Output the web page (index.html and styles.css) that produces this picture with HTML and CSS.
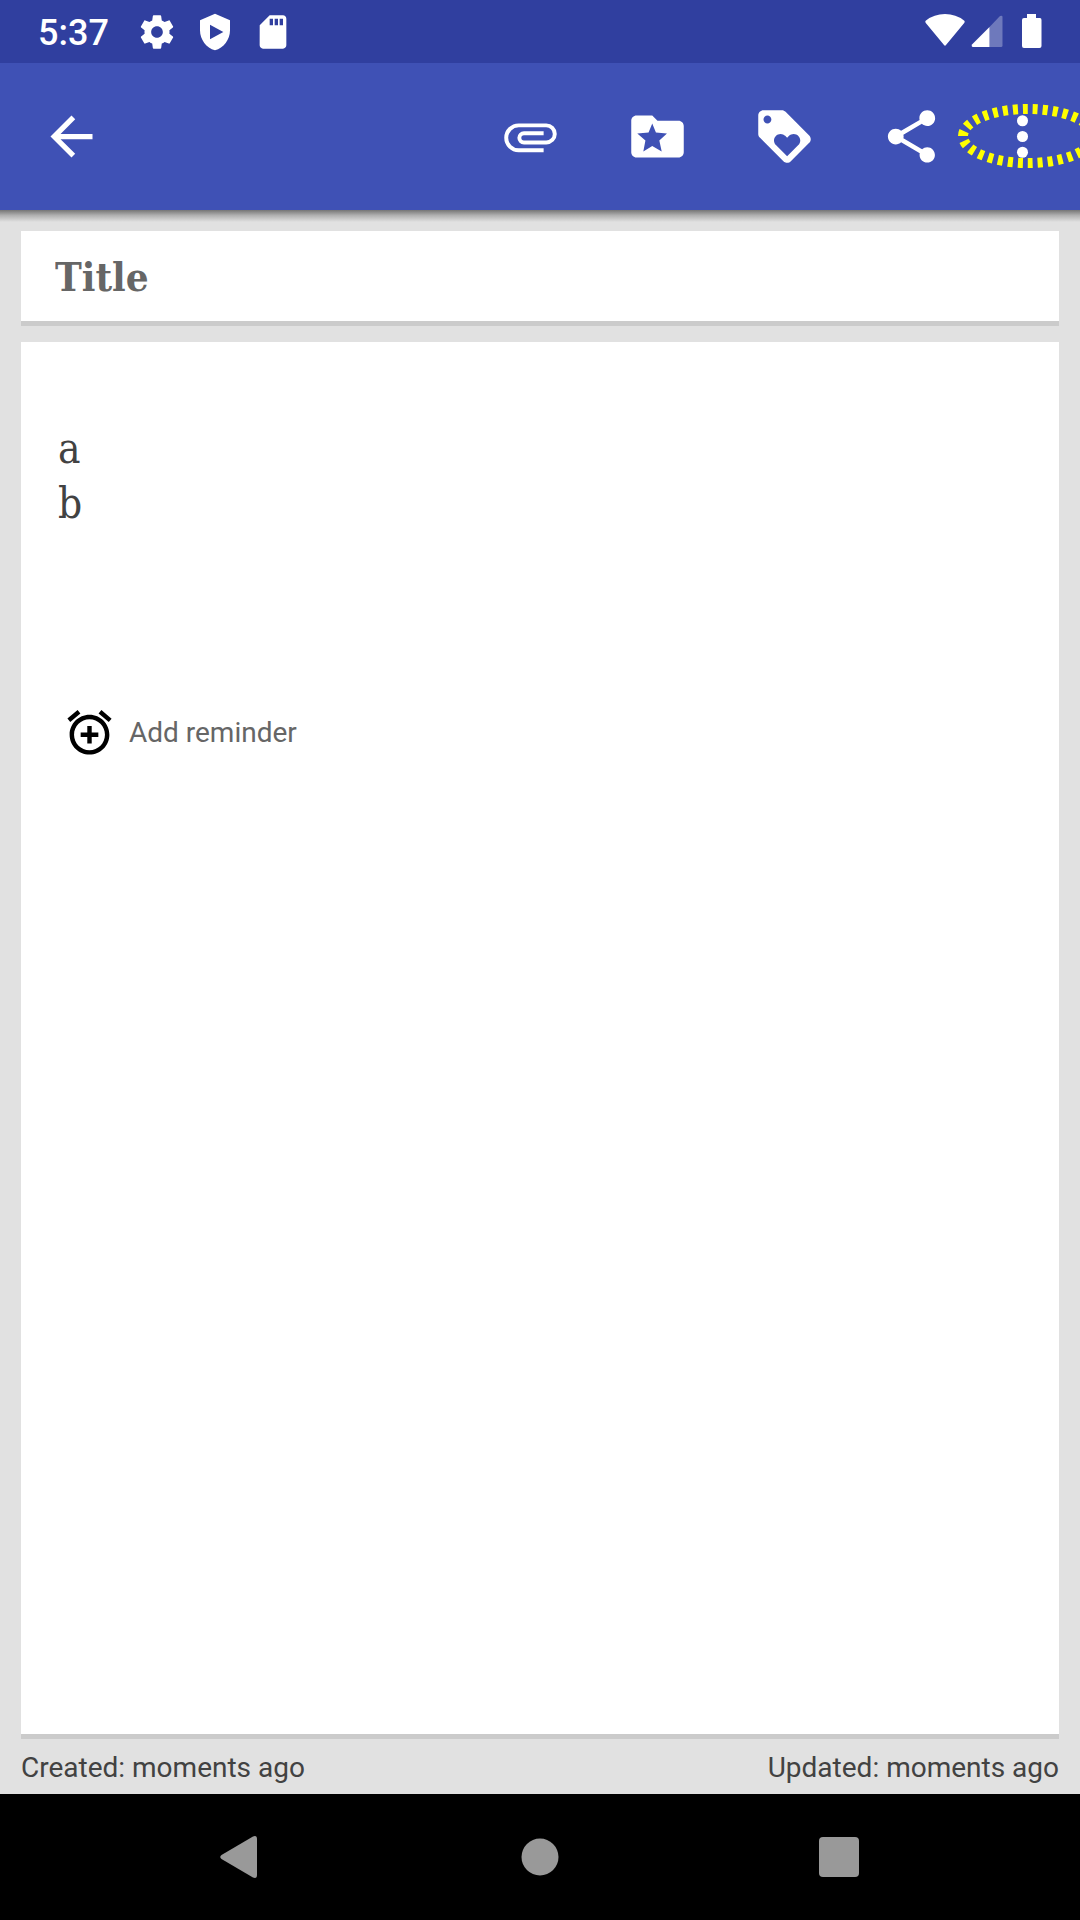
FILE: index.html
```html
<!DOCTYPE html>
<html lang="en">
<head>
<meta charset="utf-8">
<meta name="viewport" content="width=device-width, initial-scale=1">
<title>Note</title>
<link rel="stylesheet" href="styles.css">
</head>
<body>
<div class="status-bar">
  <span class="clock">5:37</span>
  <div class="status-left">
    <svg class="status-icon" viewBox="0 0 24 24"><path fill-rule="evenodd" d="M19.43 12.98c.04-.32.07-.64.07-.98s-.03-.66-.07-.98l2.11-1.65c.19-.15.24-.42.12-.64l-2-3.46c-.12-.22-.39-.3-.61-.22l-2.49 1c-.52-.4-1.08-.73-1.69-.98l-.38-2.65C14.46 2.18 14.25 2 14 2h-4c-.25 0-.46.18-.49.42l-.38 2.65c-.61.25-1.17.59-1.69.98l-2.49-1c-.23-.09-.49 0-.61.22l-2 3.46c-.13.22-.07.49.12.64l2.11 1.65c-.04.32-.07.65-.07.98s.03.66.07.98l-2.11 1.65c-.19.15-.24.42-.12.64l2 3.46c.12.22.39.3.61.22l2.49-1c.52.4 1.08.73 1.69.98l.38 2.65c.03.24.24.42.49.42h4c.25 0 .46-.18.49-.42l.38-2.65c.61-.25 1.17-.59 1.69-.98l2.49 1c.23.09.49 0 .61-.22l2-3.46c.12-.22.07-.49-.12-.64l-2.11-1.65zM12 15.5c-1.93 0-3.5-1.57-3.5-3.5s1.57-3.5 3.5-3.5 3.5 1.57 3.5 3.5-1.57 3.5-3.5 3.5z"/></svg>
    <svg class="status-icon" viewBox="0 0 24 24"><path fill-rule="evenodd" d="M12 1L3 5v6c0 5.55 3.84 10.74 9 12 5.16-1.26 9-6.45 9-12V5l-9-4zM9 7.7L17 12 9 16.3z"/></svg>
    <svg class="status-icon" viewBox="0 0 24 24"><path fill-rule="evenodd" d="M18 2h-8L4.02 8 4 20c0 1.1.9 2 2 2h12c1.1 0 2-.9 2-2V4c0-1.1-.9-2-2-2zM12 8h-2V4h2v4zm3 0h-2V4h2v4zm3 0h-2V4h2v4z"/></svg>
  </div>
  <div class="status-right">
    <svg width="40" height="36" viewBox="0 0 40 36"><path d="M19 33L.8 11Q-.3 9.500 1 8.500Q9 2 20 2T39 8.500Q40.300 9.500 39.200 11L21 33Q20 34.500 19 33z"/></svg>
    <svg width="32" height="36" viewBox="0 0 32 36"><path fill-opacity=".3" d="M29 4Q31.500 3 31.500 5V33.500Q31.500 35 30 35H18.500V15z"/><path d="M18.500 15V35H2Q0 34.500 1 32.500z"/></svg>
    <svg class="battery" width="20" height="36" viewBox="0 0 20 36"><path d="M5 2h9v4H18Q19.500 6 19.500 8V34Q19.500 36 17.500 36H2Q0 36 0 34V8Q0 6 2 6H5z"/></svg>
  </div>
</div>

<header class="app-bar">
  <button class="icon-button back" aria-label="Back"><svg class="icon" viewBox="0 0 24 24"><path d="M20 11H7.830l5.590-5.590L12 4l-8 8 8 8 1.410-1.410L7.830 13H20v-2z"/></svg></button>
  <button class="icon-button" aria-label="Attach file"><svg class="icon" viewBox="0 0 24 24"><path d="M7.500,18A5.500,5.500 0 0,1 2,12.500A5.500,5.500 0 0,1 7.500,7H18A4,4 0 0,1 22,11A4,4 0 0,1 18,15H9.500A2.500,2.500 0 0,1 7,12.500A2.500,2.500 0 0,1 9.500,10H17V11.500H9.500A1,1 0 0,0 8.500,12.500A1,1 0 0,0 9.500,13.500H18A2.500,2.500 0 0,0 20.500,11A2.500,2.500 0 0,0 18,8.500H7.500A4,4 0 0,0 3.500,12.500A4,4 0 0,0 7.500,16.500H17V18H7.500Z"/></svg></button>
  <button class="icon-button" aria-label="Category"><svg class="icon" viewBox="0 0 24 24"><path fill-rule="evenodd" d="M20 6h-8l-2-2H4c-1.100 0-2 .9-2 2v12c0 1.100.9 2 2 2h16c1.100 0 2-.9 2-2V8c0-1.100-.9-2-2-2zM10 7l1.400 3.500 4.200.4-2.900 2.600.9 4.200-3.600-2.100-3.400 2.100.8-4.200-3.100-2.600 4.300-.4z"/></svg></button>
  <button class="icon-button" aria-label="Tags"><svg class="icon" viewBox="0 0 24 24"><path d="M21.410 11.580l-9-9C12.050 2.220 11.550 2 11 2H4c-1.100 0-2 .9-2 2v7c0 .55.22 1.050.59 1.420l9 9c.36.36.86.58 1.410.58.55 0 1.050-.22 1.410-.59l7-7c.37-.36.59-.86.59-1.410 0-.55-.23-1.060-.59-1.420zM5.500 7C4.670 7 4 6.330 4 5.500S4.670 4 5.500 4 7 4.670 7 5.500 6.330 7 5.500 7zm11.770 8.270L13 19.540l-4.270-4.270C8.280 14.810 8 14.190 8 13.500c0-1.380 1.120-2.500 2.500-2.500.69 0 1.320.28 1.770.74l.73.72.73-.73c.45-.45 1.080-.73 1.770-.73 1.380 0 2.500 1.120 2.500 2.500 0 .69-.28 1.320-.73 1.770z"/></svg></button>
  <button class="icon-button" aria-label="Share"><svg class="icon" viewBox="0 0 24 24"><path d="M18 16.080c-.76 0-1.440.3-1.960.77L8.910 12.700c.05-.23.09-.46.09-.7s-.04-.47-.09-.7l7.050-4.110c.54.5 1.250.81 2.040.81 1.660 0 3-1.340 3-3s-1.340-3-3-3-3 1.340-3 3c0 .24.04.47.09.7L8.040 9.810C7.500 9.310 6.790 9 6 9c-1.660 0-3 1.340-3 3s1.340 3 3 3c.79 0 1.500-.31 2.040-.81l7.120 4.160c-.05.21-.08.43-.08.65 0 1.610 1.310 2.920 2.920 2.920s2.920-1.310 2.920-2.920-1.310-2.920-2.920-2.920z"/></svg></button>
  <button class="icon-button more" aria-label="More options">
    <svg class="icon" viewBox="0 0 24 24"><circle cx="12" cy="6" r="2.100"/><circle cx="12" cy="12" r="2.100"/><circle cx="12" cy="18" r="2.100"/></svg>
    <svg class="highlight" viewBox="0 0 140 64"><path d="M5 32A65 27 0 0 1 135 32"/><path d="M5 32A65 27 0 0 0 135 32" stroke-dashoffset="-5"/></svg>
  </button>
</header>

<main class="note">
  <input class="card title" type="text" placeholder="Title" aria-label="Title">
  <section class="card body">
    <textarea class="content" rows="2" aria-label="Content" spellcheck="false">a
b</textarea>
    <button class="reminder">
      <svg class="alarm" viewBox="0 0 24 24"><path d="M7.880 3.390L6.600 1.860 2 5.710l1.290 1.530 4.590-3.850zM22 5.720l-4.600-3.860-1.290 1.530 4.600 3.860L22 5.720zM12 4c-4.970 0-9 4.030-9 9s4.020 9 9 9c4.970 0 9-4.030 9-9s-4.030-9-9-9zm0 16c-3.870 0-7-3.130-7-7s3.130-7 7-7 7 3.130 7 7-3.130 7-7 7zm1-11h-2v3H8v2h3v3h2v-3h3v-2h-3V9z"/></svg>
      <span>Add reminder</span>
    </button>
  </section>
  <footer class="dates"><span>Created: moments ago</span><span>Updated: moments ago</span></footer>
</main>

<nav class="nav-bar">
  <button class="nav-button" aria-label="Back"><svg width="42" height="44" viewBox="0 0 42 44"><path d="M1.500 20Q-1 22 1.500 24L33 42.500Q37 44 37 40V4Q37 0 33 1.500z"/></svg></button>
  <button class="nav-button" aria-label="Home"><svg width="38" height="38" viewBox="0 0 38 38"><circle cx="19" cy="19" r="18.500"/></svg></button>
  <button class="nav-button" aria-label="Recent apps"><svg width="40" height="40" viewBox="0 0 40 40"><rect width="40" height="40" rx="4"/></svg></button>
</nav>
</body>
</html>
```
FILE: styles.css
```css
* {
  box-sizing: border-box;
}

body {
  margin: 0;
  min-height: 100vh;
  display: flex;
  flex-direction: column;
  background: #e1e1e1;
  color: #424242;
  font-family: Roboto, sans-serif;
  font-size: 28px;
}

button {
  border: 0;
  padding: 0;
  background: none;
  color: inherit;
  font: inherit;
}

svg {
  display: block;
  flex: none;
}

/* System status bar */
.status-bar {
  height: 63px;
  padding: 0 38px;
  display: flex;
  align-items: center;
  background: #303f9f;
  color: #fff;
  fill: #fff;
}

.clock {
  width: 99px;
  font-size: 36px;
  font-weight: 500;
  line-height: 64px;
  padding-top: 2px;
}

.status-left {
  display: flex;
  gap: 18px;
}

.status-icon {
  width: 40px;
  height: 40px;
}

.status-right {
  margin-left: auto;
  padding-bottom: 3px;
  display: flex;
  gap: 6px;
}

.battery {
  margin-left: 13px;
}

/* App bar */
.app-bar {
  position: relative;
  height: 147px;
  display: flex;
  overflow-x: clip;
  background: #3f51b5;
  fill: #fff;
}

.app-bar::after {
  content: "";
  position: absolute;
  top: 100%;
  left: 0;
  right: 0;
  height: 12px;
  background: linear-gradient(#757575, #b0b0b0 45%, #e1e1e1);
}

.icon-button {
  width: 127px;
  padding-bottom: 1px;
  display: flex;
  align-items: center;
  justify-content: center;
}

.icon {
  width: 63px;
  height: 63px;
}

.back {
  width: 142px;
  margin-right: auto;
}

.more {
  position: relative;
  width: 105px;
  padding-right: 10px;
}

.highlight {
  position: absolute;
  left: -17px;
  top: 41px;
  width: 140px;
  height: 64px;
  fill: none;
  stroke: #ff0;
  stroke-width: 10px;
  stroke-dasharray: 5 5;
}

/* Note */
.note {
  flex: 1;
  padding: 21px 21px 0;
  display: flex;
  flex-direction: column;
  gap: 16px;
}

.card {
  border: 0;
  border-bottom: 5px solid #cbcbcb;
  border-radius: 0;
  background: #fff;
}

.title {
  width: 100%;
  height: 95px;
  padding: 0 34px;
  font: bold 40px "Roboto Slab", "DejaVu Serif Condensed", "DejaVu Serif", serif;
}

.title::placeholder {
  color: #666;
}

.body {
  flex: 1;
  padding: 79px 37px 0;
  display: flex;
  flex-direction: column;
  align-items: flex-start;
  gap: 175px;
}

.content {
  display: block;
  width: 100%;
  height: 110px;
  border: 0;
  padding: 0;
  resize: none;
  overflow: hidden;
  background: none;
  color: #424242;
  font: 42px/55px "Roboto Slab", "DejaVu Serif Condensed", "DejaVu Serif", serif;
}

.reminder {
  padding-left: 5px;
  display: flex;
  align-items: center;
  gap: 13px;
  color: #666;
}

.alarm {
  width: 53px;
  height: 53px;
}

.dates {
  margin-top: -16px;
  height: 55px;
  padding-top: 2px;
  display: flex;
  align-items: center;
  justify-content: space-between;
}

/* System navigation bar */
.nav-bar {
  height: 126px;
  padding: 0 91px;
  display: grid;
  grid-template-columns: repeat(3, 1fr);
  background: #000;
  fill: #999;
}

.nav-button {
  display: flex;
  align-items: center;
  justify-content: center;
}
```
